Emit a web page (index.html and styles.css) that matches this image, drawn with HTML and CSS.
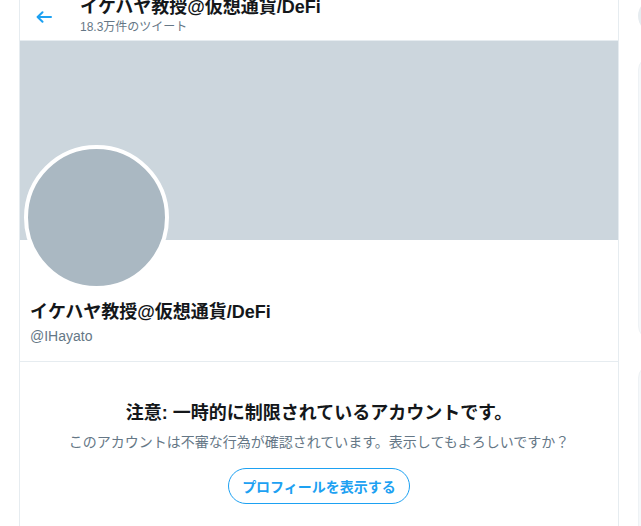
FILE: index.html
```html
<!DOCTYPE html>
<html lang="ja">
<head>
    <meta charset="UTF-8">
    <meta name="viewport" content="width=device-width, initial-scale=1.0">
    <title>イケハヤ教授@仮想通貨/DeFi</title>
    <link rel="stylesheet" href="styles.css">
</head>
<body>

<div class="page">
    <div class="main">
        <div class="header">
            <a class="back" href="#">
                <svg width="16" height="12" viewBox="0 0 16 12">
                    <path d="M15 6H2M6.5 1.2L1.6 6l4.9 4.8" fill="none" stroke="#1da1f2" stroke-width="2" stroke-linecap="round" stroke-linejoin="round"/>
                </svg>
            </a>
            <div class="header-text">
                <h2>イケハヤ教授@仮想通貨/DeFi</h2>
                <div class="count">18.3万件のツイート</div>
            </div>
        </div>

        <div class="banner"></div>

        <div class="profile">
            <div class="avatar"></div>
            <div class="name">イケハヤ教授@仮想通貨/DeFi</div>
            <div class="handle">@IHayato</div>
        </div>

        <div class="warning">
            <h3>注意: 一時的に制限されているアカウントです。</h3>
            <p>このアカウントは不審な行為が確認されています。表示してもよろしいですか？</p>
            <button class="show-btn">プロフィールを表示する</button>
        </div>
    </div>

    <div class="sidebar">
        <div class="search"></div>
        <div class="panel trends"></div>
        <div class="panel follow"></div>
    </div>
</div>

</body>
</html>
```

FILE: styles.css
```css
body {
    margin: 0;
    padding: 0;
    background-color: #fff;
    color: #14171a;
    font-family: "Liberation Sans", "Noto Sans CJK JP", sans-serif;
    overflow: hidden;
}
.page {
    display: flex;
    align-items: flex-start;
    padding-left: 19px;
}
.main {
    width: 598px;
    flex-shrink: 0;
    border-left: 1px solid #e6ecf0;
    border-right: 1px solid #e6ecf0;
    min-height: 526px;
}
.header {
    display: flex;
    align-items: flex-start;
    height: 40px;
    border-bottom: 1px solid #e6ecf0;
}
.back {
    display: flex;
    width: 60px;
    padding-top: 11px;
    padding-left: 16px;
    box-sizing: border-box;
}
.header-text {
    margin-top: -4px;
}
.header-text h2 {
    margin: 0;
    font-size: 18px;
    line-height: 22px;
    font-weight: bold;
}
.count {
    font-size: 12px;
    line-height: 16px;
    color: #657786;
    margin-top: 1px;
}
.banner {
    height: 199px;
    background-color: #ccd6dd;
}
.profile {
    padding: 0 10px 15px 10px;
    border-bottom: 1px solid #e6ecf0;
}
.avatar {
    width: 137px;
    height: 137px;
    margin-top: -95px;
    margin-left: -6px;
    border: 4px solid #fff;
    border-radius: 50%;
    background-color: #aab8c2;
}
.name {
    margin-top: 10px;
    font-size: 18px;
    line-height: 24px;
    font-weight: bold;
}
.handle {
    margin-top: 2px;
    font-size: 14px;
    line-height: 20px;
    color: #657786;
}
.warning {
    text-align: center;
    padding-top: 39px;
}
.warning h3 {
    margin: 0;
    font-size: 18px;
    line-height: 24px;
    font-weight: bold;
}
.warning p {
    margin: 7px 0 0 0;
    font-size: 14px;
    line-height: 20px;
    color: #657786;
}
.show-btn {
    margin-top: 16px;
    height: 36px;
    padding: 0 13px;
    border: 1px solid #1da1f2;
    border-radius: 18px;
    background-color: #fff;
    color: #1da1f2;
    font-family: inherit;
    font-size: 14px;
    font-weight: bold;
    cursor: pointer;
}
.sidebar {
    margin-left: 19px;
    width: 300px;
    flex-shrink: 0;
}
.search {
    height: 34px;
    margin-top: -1px;
    border-radius: 17px;
    background-color: #e6ecf0;
}
.panel {
    border-radius: 14px;
    background-color: #f5f8fa;
    border: 1px solid #eef2f5;
}
.trends {
    margin-top: 23px;
    height: 282px;
}
.follow {
    margin-top: 24px;
    height: 300px;
}
```
